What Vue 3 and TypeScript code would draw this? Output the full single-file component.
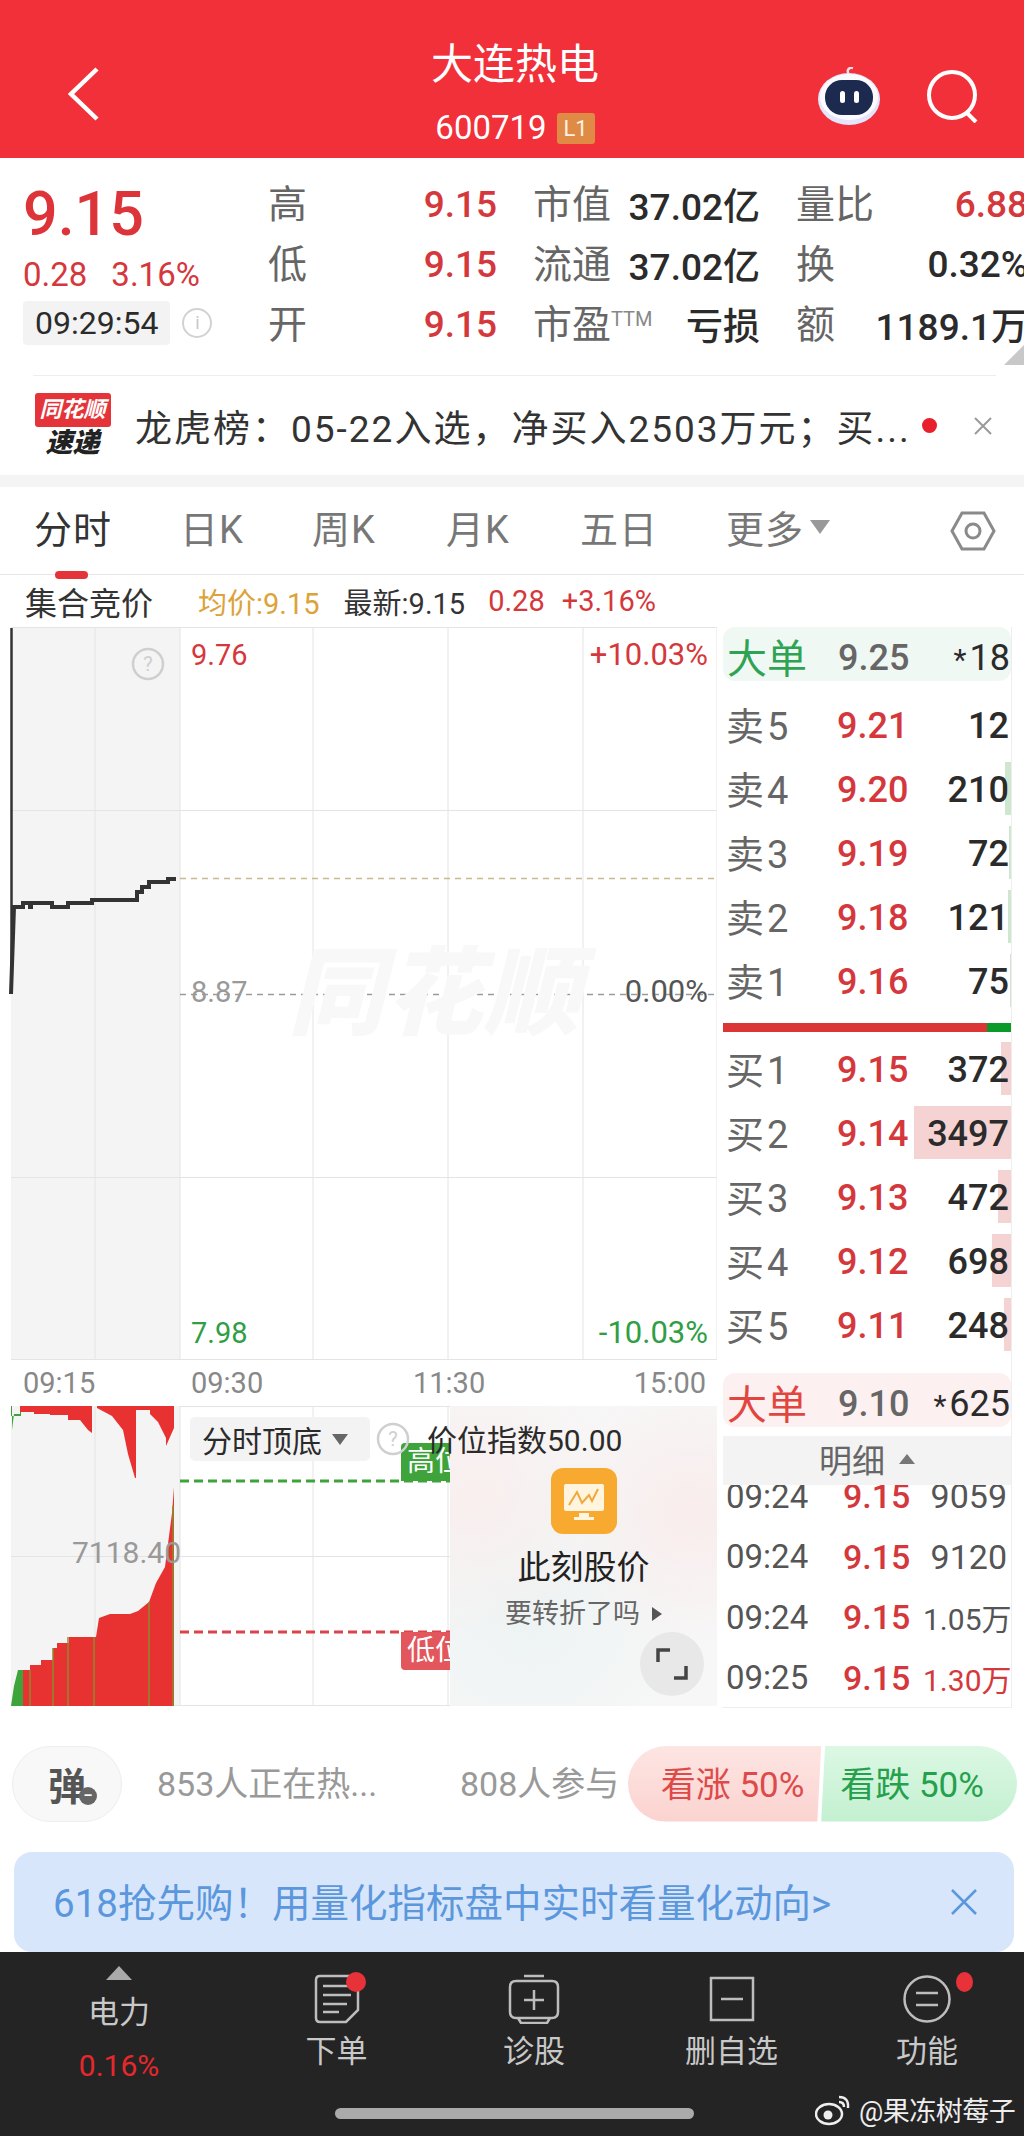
<template>
  <div class="page">
    <!-- Header -->
    <header class="top">
      <svg class="back" width="36" height="56" viewBox="0 0 36 56"><path d="M31 3 L5 28 L31 53" fill="none" stroke="#fff" stroke-width="4.5" /></svg>
      <div class="top-title">
        <div class="name">大连热电</div>
        <div class="code">600719<span class="lv">L1</span></div>
      </div>
      <div class="top-actions">
        <svg width="62" height="58" viewBox="0 0 62 58">
          <path d="M31 8 C28 3 31 0 35 1" fill="none" stroke="#f6dfe4" stroke-width="2.5" />
          <ellipse cx="31" cy="32" rx="31" ry="26" fill="#e4e4fa" />
          <ellipse cx="31" cy="30" rx="29" ry="23" fill="#fbfbff" />
          <rect x="7" y="13" width="48" height="35" rx="17" fill="#1b2a4e" />
          <rect x="22" y="24" width="5" height="12" rx="2.5" fill="#fff" />
          <rect x="36" y="24" width="5" height="12" rx="2.5" fill="#fff" />
        </svg>
        <svg width="54" height="54" viewBox="0 0 54 54"><circle cx="26" cy="26" r="23" fill="none" stroke="#fff" stroke-width="4" /><path d="M40 43 L50 53" stroke="#fff" stroke-width="4" /></svg>
      </div>
    </header>

    <!-- Quote -->
    <section class="quote">
      <div class="quote-main">
        <div class="price">9.15</div>
        <div class="change"><span>0.28</span><span>3.16%</span></div>
        <div class="clock">
          <span class="clock-time">09:29:54</span>
          <span class="info-dot">i</span>
        </div>
      </div>
      <div class="stats">
        <template v-for="row in stats" :key="row[0]">
          <div class="stat"><span class="stat-label">{{ row[0] }}</span><span class="red">{{ row[1] }}</span></div>
          <div class="stat">
            <span class="stat-label">{{ row[2] }}<sup v-if="row[2] === '市盈'">TTM</sup></span><span class="dark">{{ row[3] }}</span>
          </div>
          <div class="stat"><span class="stat-label">{{ row[4] }}</span><span :class="row[4] === '量比' ? 'red' : 'dark'">{{ row[5] }}</span></div>
        </template>
      </div>
      <span class="corner"></span>
    </section>

    <!-- Notice -->
    <section class="notice">
      <div class="notice-logo">
        <span class="logo-top">同花顺</span>
        <span class="logo-bottom">速递</span>
      </div>
      <div class="notice-text">龙虎榜：05-22入选，净买入2503万元；买...</div>
      <span class="notice-dot"></span>
      <svg width="20" height="20" viewBox="0 0 20 20"><path d="M2 2 L18 18 M18 2 L2 18" stroke="#9a9a9a" stroke-width="2" /></svg>
    </section>
    <div class="band"></div>

    <!-- Tabs -->
    <nav class="tabs">
      <span v-for="tab in tabs" :key="tab.label" class="tab" :class="{ active: tab.active }" :style="{ width: tab.width + 'px' }">{{ tab.label }}</span>
      <span class="tab more">更多<i class="caret"></i></span>
      <svg class="hex" width="46" height="42" viewBox="0 0 46 42"><path d="M12 3 H34 L44 21 L34 39 H12 L2 21 Z" fill="none" stroke="#8a8a8a" stroke-width="3" /><circle cx="23" cy="21" r="7" fill="none" stroke="#8a8a8a" stroke-width="3" /></svg>
    </nav>

    <div class="sub">
      <span class="sub-title">集合竞价</span>
      <span class="gold">均价:9.15</span>
      <span class="sub-new">最新:9.15</span>
      <span class="red sub-chg">0.28</span>
      <span class="red">+3.16%</span>
    </div>

    <main class="market">
      <div class="charts">
        <!-- Price chart -->
        <div class="price-chart">
          <svg class="layer" width="717" height="733" viewBox="0 0 717 733">
            <rect x="11" y="0" width="169" height="733" fill="#f4f4f4" />
            <path d="M95 0 V733 M180 0 V733 M313 0 V733 M448 0 V733 M583 0 V733 M717 0 V733 M11 183.500 H717 M11 550.500 H717 M11 0.500 H717 M11 732.500 H717" stroke="#e4e4e4" stroke-width="1" fill="none" />
            <path d="M180 251.500 H717" stroke="#c8b98f" stroke-width="1.500" stroke-dasharray="6 5" />
            <path d="M180 367.500 H717" stroke="#9a9a9a" stroke-width="1.500" stroke-dasharray="6 5" />
            <path d="M11.500 1 V367" stroke="#333" stroke-width="2.500" fill="none" />
            <path d="M11 367 L14 280 H23 V276 H30 V280 H31 V276 H52 V280 H68 V276 H92 V273 H137 V265 H142 V260 H149 V255 H168 V252 H176" stroke="#333" stroke-width="4" fill="none" />
          </svg>
          <span class="watermark">同花顺</span>
          <span class="axis-label red" style="left: 191px; top: 10px">9.76</span>
          <span class="axis-label red wide" style="right: 14px; top: 10px">+10.03%</span>
          <span class="axis-label gray" style="left: 191px; top: 347px">8.87</span>
          <span class="axis-label dark-gray wide" style="right: 14px; top: 347px">0.00%</span>
          <span class="axis-label green" style="left: 191px; top: 688px">7.98</span>
          <span class="axis-label green wide" style="right: 14px; top: 688px">-10.03%</span>
          <svg class="help" style="left: 131px; top: 20px" width="34" height="34" viewBox="0 0 34 34"><circle cx="17" cy="17" r="15" fill="none" stroke="#cfcfcf" stroke-width="2.500" /><text x="17" y="24" text-anchor="middle" font-size="20" fill="#cfcfcf" font-family="Roboto">?</text></svg>
        </div>

        <div class="times">
          <span>09:15</span><span>09:30</span><span>11:30</span><span>15:00</span>
        </div>

        <!-- Indicator chart -->
        <div class="indicator">
          <svg class="layer" width="717" height="300" viewBox="0 0 717 300">
            <rect x="11" y="0" width="169" height="300" fill="#f4f4f4" />
            <path d="M95 0 V300 M180 0 V300 M313 0 V300 M448 0 V300 M717 0 V300 M11 150.500 H717 M11 299.500 H717 M180 0.500 H717" stroke="#e4e4e4" stroke-width="1" fill="none" />
            <path d="M11 0 H21 V10 H11 Z M12 0 V24 L14 8 H20 V0 Z" fill="#3ea33a" />
            <path d="M20 0 V6 H34 V8 H50 V9 H68 V14 H80 L88 24 L92 27 V0 Z M97 0 V2 L112 10 L123 24 L128 48 L135 72 H136 V4 H150 V8 L158 16 L166 32 V40 L174 22 V0 Z" fill="#e83232" />
            <path d="M18 300 V264 H30 V259 H41 V254 H53 V242 H57 V237 H69 V231 H96 L99 212 L110 208 H130 L138 205 L149 196 L156 177 L165 161 L172 107 L174 81 V300 Z" fill="#e83232" />
            <path d="M11 300 L14 280 L18 264 H23 V300 Z" fill="#3ea33a" />
            <path d="M30 264 V300 M53 242 V300 M68 231 V300 M94 231 V300 M149 196 V300 M173 100 V300" stroke="#8d8a2e" stroke-width="1.500" />
            <path d="M180 75 H450" stroke="#3ea33a" stroke-width="3" stroke-dasharray="9 5" />
            <path d="M180 226 H450" stroke="#d9434b" stroke-width="3" stroke-dasharray="9 5" />
          </svg>
          <div class="level high">高位</div>
          <div class="level low">低位</div>
          <span class="ind-value">7118.40</span>
          <div class="promo">
            <svg width="66" height="66" viewBox="0 0 66 66">
              <rect width="66" height="66" rx="12" fill="#f8a92f" />
              <rect x="13" y="16" width="40" height="27" rx="2" fill="#fff4de" />
              <path d="M18 37 L26 24 L31 35 L38 27 L41 33 L47 21" fill="none" stroke="#f2a73a" stroke-width="2" />
              <rect x="28" y="45" width="10" height="4" fill="#fff4de" /><rect x="23" y="49" width="20" height="3" fill="#fff4de" />
            </svg>
            <div class="promo-title">此刻股价</div>
            <div class="promo-sub">要转折了吗<i class="right-caret"></i></div>
            <button class="expand">
              <svg width="34" height="34" viewBox="0 0 34 34"><path d="M3 15 V3 H15 M31 19 V31 H19" fill="none" stroke="#444" stroke-width="3.500" /></svg>
            </button>
          </div>
          <div class="ind-head">
            <span class="ind-chip">分时顶底<i class="caret small"></i></span>
            <svg width="34" height="34" viewBox="0 0 34 34"><circle cx="17" cy="17" r="15" fill="none" stroke="#cfcfcf" stroke-width="2.500" /><text x="17" y="24" text-anchor="middle" font-size="20" fill="#cfcfcf" font-family="Roboto">?</text></svg>
            <span class="ind-title">价位指数50.00</span>
          </div>
        </div>
      </div>

      <!-- Order book -->
      <aside class="book">
        <div class="big sell-big"><span class="big-label">大单</span><span class="px gray-px">9.25</span><span class="qty"><em>*</em>18</span></div>
        <div class="levels asks">
          <div v-for="l in asks" :key="l.name" class="level-row">
            <span class="lv-name">{{ l.name }}</span><span class="px red">{{ l.price }}</span><span class="qty">{{ l.qty }}</span>
            <i class="vol ask-vol" :style="{ width: l.bar + 'px' }"></i>
          </div>
        </div>
        <div class="split"><i></i></div>
        <div class="levels bids">
          <div v-for="l in bids" :key="l.name" class="level-row">
            <span class="lv-name">{{ l.name }}</span><span class="px red">{{ l.price }}</span><span class="qty">{{ l.qty }}</span>
            <i class="vol bid-vol" :style="{ width: l.bar + 'px' }"></i>
          </div>
        </div>
        <div class="big buy-big"><span class="big-label">大单</span><span class="px gray-px">9.10</span><span class="qty"><em>*</em>625</span></div>
        <div class="detail-head">明细<i class="caret up"></i></div>
        <div class="ticks">
          <div v-for="(t, i) in ticks" :key="i" class="tick">
            <span class="tick-time">{{ t.time }}</span><span class="red tick-price">9.15</span><span class="tick-vol" :class="{ red: t.up, wan: t.vol.endsWith('万') }">{{ t.vol }}</span>
          </div>
        </div>
      </aside>
    </main>

    <!-- Interaction row -->
    <section class="social">
      <div class="danmu">弹<i>–</i></div>
      <span class="hot">853人正在热...</span>
      <span class="joined">808人参与</span>
      <div class="vote">
        <span class="vote-up">看涨 50%</span>
        <span class="vote-down">看跌 50%</span>
      </div>
    </section>

    <section class="banner">
      <span class="banner-text">618抢先购！用量化指标盘中实时看量化动向&gt;</span>
      <svg width="28" height="28" viewBox="0 0 28 28"><path d="M2 2 L26 26 M26 2 L2 26" stroke="#5b97dc" stroke-width="2.500" /></svg>
    </section>

    <!-- Bottom bar -->
    <footer class="bar">
      <div class="sector">
        <i class="sector-up"></i>
        <span class="sector-name">电力</span>
        <span class="sector-pct">0.16%</span>
      </div>
      <div class="action">
        <span class="action-icon">
          <svg width="46" height="50" viewBox="0 0 46 50"><path d="M6 2 H40 Q44 2 44 6 V36 L32 48 H6 Q2 48 2 44 V6 Q2 2 6 2 Z M9 12 H37 M9 21 H37 M9 30 H33 M9 38 H25" fill="none" stroke="#bdbdbd" stroke-width="2.500" /></svg>
          <i class="badge"></i>
        </span>
        <span>下单</span>
      </div>
      <div class="action">
        <span class="action-icon">
          <svg width="52" height="50" viewBox="0 0 52 50"><path d="M16 2 H36 M8 7 H44 Q50 7 50 13 V38 Q50 44 44 44 H8 Q2 44 2 38 V13 Q2 7 8 7 Z M26 16 V36 M16 26 H36 M10 44 L13 49 H39 L42 44" fill="none" stroke="#bdbdbd" stroke-width="2.500" /></svg>
        </span>
        <span>诊股</span>
      </div>
      <div class="action">
        <span class="action-icon">
          <svg width="46" height="46" viewBox="0 0 46 46"><path d="M2 2 H44 V44 H2 Z M12 23 H34" fill="none" stroke="#bdbdbd" stroke-width="2.500" /></svg>
        </span>
        <span>删自选</span>
      </div>
      <div class="action">
        <span class="action-icon">
          <svg width="48" height="48" viewBox="0 0 48 48"><circle cx="24" cy="24" r="22.500" fill="none" stroke="#bdbdbd" stroke-width="2.500" /><path d="M13 18 H35 M13 30 H35" stroke="#bdbdbd" stroke-width="2.500" /></svg>
          <i class="badge far"></i>
        </span>
        <span>功能</span>
      </div>
      <div class="home"></div>
      <div class="mark">
        <svg width="36" height="32" viewBox="0 0 36 32"><ellipse cx="14" cy="20" rx="13" ry="10" fill="none" stroke="#eee" stroke-width="2.500" /><circle cx="13" cy="21" r="4.500" fill="#eee" /><path d="M24 3 Q34 3 33 14 M24 8 Q29 8 29 13" fill="none" stroke="#eee" stroke-width="2.500" /></svg>
        <span>@果冻树莓子</span>
      </div>
    </footer>
  </div>
</template>

<script setup lang="ts">
interface BookLevel {
  name: string
  price: string
  qty: number
  bar: number
}

const stats: string[][] = [
  ['高', '9.15', '市值', '37.02亿', '量比', '6.88'],
  ['低', '9.15', '流通', '37.02亿', '换', '0.32%'],
  ['开', '9.15', '市盈', '亏损', '额', '1189.1万'],
]

const tabs = [
  { label: '分时', width: 146, active: true },
  { label: '日K', width: 132, active: false },
  { label: '周K', width: 134, active: false },
  { label: '月K', width: 134, active: false },
  { label: '五日', width: 146, active: false },
]

const asks: BookLevel[] = [
  { name: '卖5', price: '9.21', qty: 12, bar: 0 },
  { name: '卖4', price: '9.20', qty: 210, bar: 6 },
  { name: '卖3', price: '9.19', qty: 72, bar: 2 },
  { name: '卖2', price: '9.18', qty: 121, bar: 3 },
  { name: '卖1', price: '9.16', qty: 75, bar: 1 },
]

const bids: BookLevel[] = [
  { name: '买1', price: '9.15', qty: 372, bar: 10 },
  { name: '买2', price: '9.14', qty: 3497, bar: 97 },
  { name: '买3', price: '9.13', qty: 472, bar: 13 },
  { name: '买4', price: '9.12', qty: 698, bar: 19 },
  { name: '买5', price: '9.11', qty: 248, bar: 7 },
]

const ticks = [
  { time: '09:24', vol: '9059', up: false },
  { time: '09:24', vol: '9120', up: false },
  { time: '09:24', vol: '1.05万', up: false },
  { time: '09:25', vol: '1.30万', up: true },
]
</script>

<style>
html, body { margin: 0; background: #fff; }
</style>

<style scoped>
.page {
  width: 1024px;
  height: 2136px;
  overflow: hidden;
  position: relative;
  background: #fff;
  font-family: Roboto, "Noto Sans CJK SC", sans-serif;
  color: #333;
}

.red { color: #d5383c; }
.dark { color: #2b2b2b; }

/* Header */
.top {
  height: 158px;
  background: #f1303a;
  display: grid;
  grid-template-columns: 1fr auto 1fr;
  align-items: center;
  color: #fff;
  padding: 0 44px 0 66px;
  box-sizing: border-box;
}
.back { margin-top: 30px; }
.top-title { text-align: center; margin-left: -16px; padding-top: 28px; }
.name { font-size: 42px; line-height: 50px; margin-top: 2px; }
.code { font-size: 33px; line-height: 40px; margin-top: 18px; display: flex; align-items: center; justify-content: center; gap: 10px; }
.lv { background: #e08b45; color: #fff3e4; font-size: 22px; width: 38px; height: 31px; line-height: 31px; border-radius: 3px; text-align: center; }
.top-actions { display: flex; justify-content: flex-end; align-items: center; gap: 46px; margin-top: 34px; }

/* Quote */
.quote {
  height: 217px;
  display: flex;
  position: relative;
  padding: 16px 0 0 23px;
  box-sizing: border-box;
}
.quote-main { width: 245px; flex: none; }
.price { font-size: 61px; line-height: 68px; color: #dd343a; font-weight: 500; margin-top: 6px; }
.change { display: flex; gap: 24px; font-size: 33px; line-height: 36px; color: #d5383c; margin-top: 9px; }
.clock { display: flex; align-items: center; gap: 12px; margin-top: 8px; }
.clock-time { background: #f3f3f3; border-radius: 4px; padding: 0 12px; font-size: 32px; line-height: 44px; color: #2b2b2b; }
.info-dot { width: 26px; height: 26px; border: 2px solid #d2d2d2; border-radius: 50%; color: #c8c8c8; font-size: 18px; line-height: 26px; text-align: center; }
.stats {
  display: grid;
  grid-template-columns: 229px 227px 232px;
  column-gap: 36px;
  grid-auto-rows: 60px;
  flex: none;
}
.stat { display: flex; justify-content: space-between; align-items: center; font-size: 37px; font-weight: 500; white-space: nowrap; height: 60px; }
.stat-label { font-size: 39px; font-weight: 400; color: #666; margin-bottom: 6px; }
.stat-label sup { font-size: 20px; color: #888; vertical-align: 12px; line-height: 0; }
.corner { position: absolute; right: 0; bottom: 10px; width: 0; height: 0; border-left: 20px solid transparent; border-bottom: 20px solid #c8c8c8; }

/* Notice */
.notice {
  height: 100px;
  margin: 0 28px 0 33px;
  border-top: 1px solid #eee;
  display: flex;
  align-items: center;
  box-sizing: border-box;
}
.notice-logo { width: 79px; flex: none; display: flex; flex-direction: column; align-items: center; }
.logo-top { background: #e4343a; color: #fff; font-size: 22px; font-style: italic; font-weight: 700; width: 76px; height: 34px; line-height: 34px; text-align: center; border-radius: 3px; }
.logo-bottom { font-size: 27px; font-style: italic; font-weight: 900; color: #222; line-height: 32px; }
.notice-text { margin-left: 23px; width: 782px; font-size: 37px; letter-spacing: 2px; color: #333; white-space: nowrap; flex: none; overflow: hidden; }
.notice-dot { width: 15px; height: 15px; background: #e8202c; border-radius: 50%; flex: none; margin-right: 36px; margin-left: 5px; }
.band { height: 12px; background: #f4f4f4; }

/* Tabs */
.tabs {
  height: 88px;
  display: flex;
  align-items: center;
  padding: 0 0 8px 34px;
  border-bottom: 1px solid #e8e8e8;
  box-sizing: border-box;
  position: relative;
}
.tab { font-size: 38px; color: #777; flex: none; letter-spacing: 1px; }
.tab.active { color: #333; position: relative; }
.tab.active::after { content: ""; position: absolute; left: 21px; bottom: -25px; width: 33px; height: 8px; border-radius: 4px; background: #e4343a; }
.more { display: flex; align-items: center; gap: 6px; color: #777; }
.caret { display: inline-block; width: 0; height: 0; border: 10px solid transparent; border-top: 14px solid #999; border-bottom: 0; }
.caret.small { border-width: 8px; border-top-width: 11px; border-bottom-width: 0; border-top-color: #666; margin-left: 10px; }
.caret.up { border-width: 8px; border-bottom: 10px solid #777; border-top: 0; margin-left: 14px; }
.hex { position: absolute; left: 950px; top: 23px; }
.sub {
  height: 52px;
  display: flex;
  align-items: center;
  padding-left: 25px;
  font-size: 29px;
  white-space: nowrap;
}
.sub-title { font-size: 32px; color: #333; margin-right: 45px; }
.gold { color: #dba33a; margin-right: 24px; }
.sub-new { color: #333; margin-right: 23px; }
.sub-chg { margin-right: 17px; }

/* Charts */
.market { display: flex; height: 1089px; }
.charts { width: 722px; flex: none; }
.price-chart { height: 733px; position: relative; overflow: hidden; }
.layer { position: absolute; left: 0; top: 0; }
.help { position: absolute; }
.watermark { position: absolute; left: 288px; top: 315px; font-size: 96px; font-style: italic; font-weight: 900; color: #f8f8f8; white-space: nowrap; line-height: 104px; letter-spacing: 2px; }
.axis-label { position: absolute; font-size: 29px; line-height: 36px; white-space: nowrap; }
.axis-label.wide { font-size: 31px; }
.axis-label.gray { color: #999; }
.axis-label.dark-gray { color: #555; }
.axis-label.green { color: #2f9e44; }
.times { height: 46px; width: 717px; display: grid; grid-template-columns: 168px 222px 1fr auto; align-items: center; padding: 0 11px 0 23px; box-sizing: border-box; font-size: 29px; color: #888; }

.indicator { height: 300px; width: 717px; position: relative; overflow: hidden; }
.level { position: absolute; left: 401px; width: 60px; height: 38px; color: #fff; font-size: 28px; line-height: 38px; padding-left: 6px; box-sizing: border-box; white-space: nowrap; }
.level.high { top: 37px; background: #3ea33a; border-radius: 4px 0 0 0; }
.level.low { top: 226px; background: #e3565c; border-radius: 0 0 0 4px; }
.ind-value { position: absolute; left: 72px; top: 127px; font-size: 30px; line-height: 40px; color: #999; }
.ind-head { position: absolute; left: 190px; top: 11px; display: flex; align-items: center; font-size: 30px; white-space: nowrap; color: #2b2b2b; }
.ind-chip { background: #f3f3f3; border-radius: 5px; height: 44px; width: 180px; padding-left: 12px; box-sizing: border-box; display: flex; align-items: center; margin-right: 6px; }
.ind-title { margin-left: 17px; margin-top: -2px; }
.promo {
  position: absolute;
  left: 450px;
  top: 0;
  width: 267px;
  height: 300px;
  background: radial-gradient(circle at 90% 35%, #f9ecec 0, transparent 45%), radial-gradient(circle at 10% 30%, #f9eeee 0, transparent 45%), radial-gradient(circle at 30% 70%, #edf3f3 0, transparent 60%), #f7f7f7;
  display: flex;
  flex-direction: column;
  align-items: center;
  padding-top: 62px;
  box-sizing: border-box;
}
.promo-title { font-size: 33px; line-height: 44px; color: #222; margin-top: 12px; }
.promo-sub { font-size: 27px; line-height: 36px; color: #666; margin-top: 6px; display: flex; align-items: center; }
.right-caret { display: inline-block; width: 0; height: 0; border: 7px solid transparent; border-left: 10px solid #555; border-right: 0; margin-left: 12px; }
.expand { position: absolute; left: 190px; top: 226px; width: 64px; height: 64px; border-radius: 50%; background: #e8e8e8; border: 0; padding: 0; display: flex; align-items: center; justify-content: center; }

/* Order book */
.book { width: 290px; margin-right: 12px; border-right: 1px solid #eee; border-bottom: 1px solid #eee; height: 1081px; box-sizing: border-box; flex: none; font-size: 36px; overflow: hidden; }
.big { height: 54px; display: grid; grid-template-columns: 111px 88px 84px; align-items: center; padding: 0 0 7px 4px; border-radius: 12px; margin-left: 1px; width: 288px; box-sizing: border-box; }
.sell-big { background: #f0f8f3; }
.sell-big .big-label { color: #2fa354; }
.buy-big { background: #fdf0f0; margin-top: 15px; }
.buy-big .big-label { color: #e2453f; }
.big-label { font-size: 40px; margin-bottom: 4px; white-space: nowrap; }
.gray-px { color: #666; }
.qty { text-align: right; color: #2b2b2b; position: relative; white-space: nowrap; }
.qty em { font-style: normal; font-size: 30px; margin-right: 3px; }
.levels { display: flex; flex-direction: column; }
.asks { margin-top: 13px; }
.level-row { height: 64px; display: grid; grid-template-columns: 111px 88px 84px; align-items: center; padding-left: 4px; position: relative; width: 289px; box-sizing: border-box; }
.lv-name { color: #666; font-size: 38px; letter-spacing: 3px; margin-bottom: 5px; white-space: nowrap; }
.px { font-weight: 500; }
.level-row .qty { z-index: 1; font-weight: 500; }
.vol { position: absolute; right: 0; top: 4px; height: 53px; }
.ask-vol { background: #cfe6cf; }
.bid-vol { background: #f6d3d3; }
.split { height: 9px; width: 288px; background: #0a9a2a; margin: 9px 0 6px 1px; }
.split i { display: block; height: 100%; width: 264px; background: #dc3535; }
.detail-head { height: 49px; width: 288px; margin: 9px 0 0 1px; background: #f3f3f3; font-size: 33px; color: #666; display: flex; align-items: center; justify-content: center; padding-bottom: 4px; box-sizing: border-box; }
.ticks { height: 222px; overflow: hidden; display: flex; flex-direction: column; }
.tick { height: 60.500px; display: grid; grid-template-columns: 117px 80px 84px; align-items: center; font-size: 33px; padding-left: 4px; color: #555; flex: none; }
.tick:first-child { margin-top: -19px; }
.tick-price { font-weight: 500; font-size: 34px; }
.tick-vol { text-align: right; white-space: nowrap; font-size: 34px; }
.tick-vol.wan { font-size: 30px; }

/* Social */
.social { height: 81px; margin-top: 27px; display: flex; align-items: center; position: relative; }
.danmu { margin-left: 12px; width: 110px; height: 76px; border: 1px solid #eee; background: #f8f8f8; border-radius: 38px; box-sizing: border-box; display: flex; align-items: center; justify-content: center; font-size: 38px; font-weight: 700; color: #555; position: relative; }
.danmu i { position: absolute; left: 66px; top: 40px; width: 18px; height: 18px; border-radius: 50%; background: #666; color: #fff; font-size: 14px; line-height: 16px; text-align: center; font-style: normal; }
.hot { margin-left: 35px; width: 303px; font-size: 34px; color: #999; flex: none; margin-bottom: 4px; white-space: nowrap; }
.joined { font-size: 34px; color: #999; width: 168px; flex: none; margin-bottom: 4px; white-space: nowrap; }
.vote { display: flex; width: 389px; height: 76px; flex: none; font-size: 35px; }
.vote-up { flex: 192; background: linear-gradient(180deg, #fde5e2, #fbd3d0); color: #dd4a4a; border-radius: 38px 0 0 38px; display: flex; align-items: center; justify-content: center; clip-path: polygon(0 0, 100% 0, 98% 100%, 0 100%); padding: 0 0 4px 16px; white-space: nowrap; }
.vote-down { flex: 197; background: linear-gradient(180deg, #dcf8e4, #c3f0d0); color: #25a04c; border-radius: 0 38px 38px 0; display: flex; align-items: center; justify-content: center; clip-path: polygon(2% 0, 100% 0, 100% 100%, 0 100%); padding: 0 14px 4px 0; white-space: nowrap; }

/* Banner */
.banner { margin: 28px 10px 0 14px; height: 100px; background: #d7e6fb; border-radius: 18px; display: flex; align-items: center; justify-content: space-between; padding: 0 36px 0 39px; font-size: 38.500px; color: #5b97dc; white-space: nowrap; }
.banner-text { margin-bottom: 4px; }

/* Bottom bar */
.bar { position: absolute; left: 0; right: 0; top: 1952px; height: 184px; background: #242424; color: #c8c8c8; font-size: 31px; display: grid; grid-template-columns: 238px 197px 198px 197px 194px; }
.sector { display: flex; flex-direction: column; align-items: center; }
.sector-up { width: 0; height: 0; border: 13px solid transparent; border-bottom: 14px solid #aaa; border-top: 0; margin-top: 14px; }
.sector-name { line-height: 40px; margin-top: 13px; }
.sector-pct { color: #e4282c; font-size: 30px; line-height: 40px; margin-top: 13px; }
.action { display: flex; flex-direction: column; align-items: center; }
.action-icon { height: 50px; margin-top: 22px; position: relative; display: flex; align-items: center; }
.action > span:last-child { line-height: 40px; margin-top: 8px; }
.badge { position: absolute; right: -6px; top: -2px; width: 20px; height: 20px; background: #e8323a; border-radius: 50%; }
.badge.far { right: -22px; top: -2px; width: 17px; }
.home { position: absolute; left: 335px; top: 156px; width: 359px; height: 11px; border-radius: 6px; background: #aaa; }
.mark { position: absolute; left: 815px; top: 138px; display: flex; align-items: center; gap: 8px; color: #eee; font-size: 27px; letter-spacing: -0.5px; white-space: nowrap; }
</style>
